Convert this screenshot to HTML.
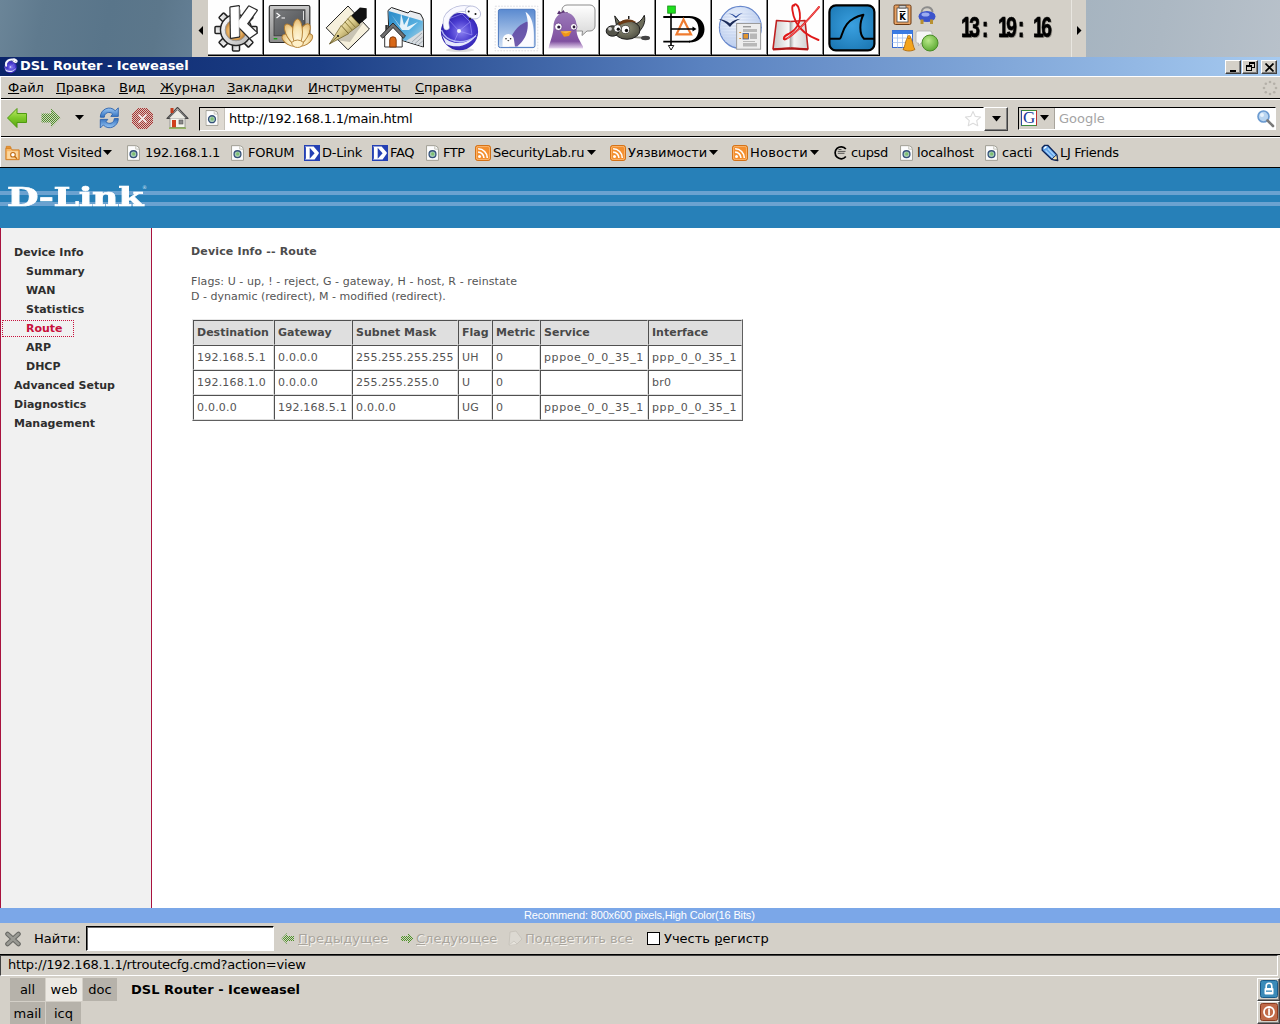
<!DOCTYPE html>
<html lang="ru">
<head>
<meta charset="utf-8">
<title>DSL Router - Iceweasel</title>
<style>
*{box-sizing:border-box;margin:0;padding:0}
html,body{width:1280px;height:1024px;overflow:hidden;background:#d4d0c8}
body{position:relative;font-family:"DejaVu Sans","Liberation Sans",sans-serif;font-size:13px;color:#000}
.abs{position:absolute}
.t{position:absolute;white-space:pre;line-height:15px}
u{text-decoration:underline;text-underline-offset:1px}
/* desktop + kicker panel */
#deskL{left:0;top:0;width:192px;height:57px;background:linear-gradient(100deg,#6b8598 0%,#5f7a8e 22%,#59758a 55%,#5c778b 80%,#647f95 100%)}
#deskR{left:1086px;top:0;width:194px;height:57px;background:linear-gradient(100deg,#a6b4c0 0%,#acb8c3 40%,#b8c1ca 100%)}
#panel{left:195px;top:0;width:890px;height:57px;background:#d4d0c8}
.pbtn{position:absolute;top:1px;width:56px;height:54px;background:#fff;border:1px solid #fff;border-right-color:#404040;border-bottom-color:#404040;box-shadow:inset -1px -1px 0 #808080}
/* window */
#title{left:0;top:57px;width:1280px;height:19px;background:linear-gradient(90deg,#0a246a 0%,#1c3f86 25%,#5a82c0 55%,#a6caf0 100%)}
#menubar{left:0;top:76px;width:1280px;height:23px;background:#d4d0c8;border-top:1px solid #fff;border-bottom:1px solid #000}
#navbar{left:0;top:99px;width:1280px;height:38px;background:#d4d0c8;border-top:1px solid #fff;border-bottom:1px solid #000}
#bmbar{left:0;top:137px;width:1280px;height:30px;background:#d4d0c8;border-top:1px solid #fff}
/* content */
#content{left:0;top:167px;width:1280px;height:741px;background:#fff;border-top:1px solid #000}
#dlhead{left:0;top:168px;width:1280px;height:60px;background:#2780b8}
#side{left:0;top:228px;width:152px;height:680px;background:#f1f1f1;border-left:1px solid #a8123e;border-right:1px solid #a8123e}
#reco{left:0;top:908px;width:1280px;height:15px;background:#7ba7e8}
#findbar{left:0;top:923px;width:1280px;height:32px;background:#d4d0c8;border-bottom:1px solid #000}
#status{left:0;top:955px;width:1280px;height:22px;background:#d4d0c8}
#taskbar{left:0;top:977px;width:1280px;height:47px;background:#d4d0c8}

.wb{position:absolute;top:60px;width:16px;height:14px;background:#d4d0c8;border:1px solid #fff;border-right-color:#404040;border-bottom-color:#404040;box-shadow:inset -1px -1px 0 #808080}
.wb i{position:absolute;background:#000;display:block}

#urlbox{left:199px;top:107px;width:785px;height:24px;background:#fff;border:1px solid;border-color:#000 #fff #fff #000}
#srchbox{left:1018px;top:107px;width:258px;height:23px;background:#fff;border:1px solid;border-color:#000 #fff #fff #000}
.btn3d{background:#d4d0c8;border:1px solid;border-color:#fff #404040 #404040 #fff;box-shadow:inset -1px -1px 0 #808080}

.pt{position:absolute;white-space:pre;font-size:11px;line-height:13px;color:#555}
.nav{position:absolute;white-space:pre;font-size:11px;line-height:13px;font-weight:bold;color:#2e2e2e}
#rt{position:absolute;left:192px;top:319px;border-collapse:separate;border-spacing:0;border:1px solid;border-color:#e8e8e8 #606060 #606060 #e8e8e8;font-size:11px;line-height:13px;color:#555;table-layout:fixed}
#rt td,#rt th{border:1px solid;border-color:#505050 #e0e0e0 #e0e0e0 #505050;height:25px;padding:0 0 0 3px;text-align:left;vertical-align:middle;white-space:pre;overflow:hidden}
#rt th{background:#dfdfdf;color:#484848;font-weight:bold}
#rt td{letter-spacing:.22px}
#rt td.us{letter-spacing:.6px}

.dis{color:#a9a59d;text-shadow:1px 1px 0 #f4f2ee}
.pgb{position:absolute;background:#b6b2aa;text-align:center;line-height:23px;font-size:13px;height:23px}
.ck{position:absolute;top:11px;transform-origin:0 0;transform:scaleX(.66);-webkit-text-stroke:.7px #000}
</style>
</head>
<body>
<svg width="0" height="0" style="position:absolute"><defs>
 <symbol id="pg" viewBox="0 0 14 17"><path d="M.6 .6 L9.500 .6 Q 13.400 1.200 13.400 5 L13.400 16.400 L.6 16.400 Z" fill="#fdfdfd" stroke="#9c9a90" stroke-width="1"/><path d="M9.300 1 L9.300 4.300 L13 4.600" fill="#f0f0ec" stroke="#b8b6ac" stroke-width=".7"/><circle cx="7" cy="9.800" r="3.700" fill="#a9cdb6" stroke="#34507a" stroke-width="1.400"/><circle cx="7.200" cy="9.500" r="1.700" fill="#7cc070"/></symbol>
 <symbol id="rss" viewBox="0 0 17 17"><rect x=".5" y=".5" width="16" height="16" rx="2.500" fill="#f49030" stroke="#d06808" stroke-width="1"/><rect x="1.500" y="1.500" width="14" height="14" rx="2" fill="none" stroke="#fcc080" stroke-width=".8"/><circle cx="4.800" cy="12.300" r="1.600" fill="#fff"/><path d="M3.300 7.600 A6.200 6.200 0 0 1 9.500 13.800" fill="none" stroke="#fff" stroke-width="1.700"/><path d="M3.300 4 A9.800 9.800 0 0 1 13.100 13.800" fill="none" stroke="#fff" stroke-width="1.700"/></symbol>
 <symbol id="dlico" viewBox="0 0 16 16"><rect width="16" height="16" fill="#2440b4"/><path d="M1 1.500 L9.600 1.500 L14.800 7.600 L14.800 8.600 L10.600 14.500 L1 14.500 L1.900 13.600 L1.900 2.400 Z" fill="#fff"/><path d="M5.700 2.800 L10.600 8.300 L5.700 13.800 Z" fill="#2440b4"/></symbol>
</defs></svg>
<div class="abs" id="deskL"></div>
<!-- ===== KDE panel (kicker) ===== -->
<svg class="abs" style="left:192px;top:0" width="894" height="57" viewBox="192 0 894 57">
<defs>
 <radialGradient id="kor" cx="45%" cy="55%" r="55%"><stop offset="0" stop-color="#fff4d8"/><stop offset=".6" stop-color="#e8b060"/><stop offset="1" stop-color="#a86820"/></radialGradient>
 <linearGradient id="kgear" x1="0" y1="0" x2="1" y2="1"><stop offset="0" stop-color="#ffffff"/><stop offset="1" stop-color="#b8b8b8"/></linearGradient>
 <linearGradient id="mon" x1="0" y1="0" x2="0" y2="1"><stop offset="0" stop-color="#c8c8c8"/><stop offset="1" stop-color="#8c8c8c"/></linearGradient>
 <linearGradient id="scr" x1="0" y1="0" x2="1" y2="1"><stop offset="0" stop-color="#7a7c7e"/><stop offset="1" stop-color="#4a4c50"/></linearGradient>
 <radialGradient id="shell" cx="50%" cy="90%" r="90%"><stop offset="0" stop-color="#fffbe8"/><stop offset=".65" stop-color="#f8e4b0"/><stop offset="1" stop-color="#e4b870"/></radialGradient>
 <linearGradient id="nib" x1="0" y1="0" x2="1" y2="1"><stop offset="0" stop-color="#fff8d0"/><stop offset=".5" stop-color="#d8c888"/><stop offset="1" stop-color="#8a7a40"/></linearGradient>
 <linearGradient id="fold" x1="0" y1="0" x2="1" y2="1"><stop offset="0" stop-color="#2a8ac8"/><stop offset=".6" stop-color="#58b0e0"/><stop offset="1" stop-color="#c8d8e0"/></linearGradient>
 <radialGradient id="globe" cx="55%" cy="50%" r="60%"><stop offset="0" stop-color="#8a80f0"/><stop offset=".5" stop-color="#4a3cd0"/><stop offset="1" stop-color="#2418a0"/></radialGradient>
 <linearGradient id="stamp" x1="0" y1="0" x2="0" y2="1"><stop offset="0" stop-color="#5a8ad0"/><stop offset="1" stop-color="#d0e0f4"/></linearGradient>
 <linearGradient id="pidg" x1="0" y1="0" x2="0" y2="1"><stop offset="0" stop-color="#9a78b8"/><stop offset=".8" stop-color="#8050a0"/><stop offset="1" stop-color="#e8d8f0"/></linearGradient>
 <linearGradient id="bub" x1="0" y1="0" x2="0" y2="1"><stop offset="0" stop-color="#ffffff"/><stop offset="1" stop-color="#d8d8d8"/></linearGradient>
 <radialGradient id="wil" cx="45%" cy="40%" r="65%"><stop offset="0" stop-color="#94947c"/><stop offset="1" stop-color="#4c4c40"/></radialGradient>
 <radialGradient id="ooo" cx="40%" cy="35%" r="70%"><stop offset="0" stop-color="#f4f8ff"/><stop offset="1" stop-color="#b4c8ec"/></radialGradient>
 <linearGradient id="book" x1="0" y1="0" x2="1" y2="0"><stop offset="0" stop-color="#c8c8c8"/><stop offset=".45" stop-color="#f8f8f8"/><stop offset=".5" stop-color="#b0b0b0"/><stop offset=".6" stop-color="#f4f4f4"/><stop offset="1" stop-color="#d0d0d0"/></linearGradient>
 <radialGradient id="shark" cx="50%" cy="45%" r="65%"><stop offset="0" stop-color="#3aa0e0"/><stop offset="1" stop-color="#1c78b4"/></radialGradient>
 <radialGradient id="grn" cx="40%" cy="35%" r="70%"><stop offset="0" stop-color="#b8e888"/><stop offset="1" stop-color="#5aa830"/></radialGradient>
 <g id="pbtn"><rect x="0" y="0" width="56" height="56" fill="#000"/><rect x="0" y="0" width="55" height="55" fill="#808080"/><rect x="0" y="0" width="54" height="54" fill="#fefefe"/></g>
</defs>
<rect x="192" y="0" width="894" height="57" fill="#d4d0c8"/>
<rect x="192" y="0" width="16" height="57" fill="#d1cdc5"/>
<path d="M203 26 L203 35 L198.500 30.500 Z" fill="#000"/>
<g id="btns">
<use href="#pbtn" x="208"/><use href="#pbtn" x="264"/><use href="#pbtn" x="320"/><use href="#pbtn" x="376"/><use href="#pbtn" x="432"/><use href="#pbtn" x="488"/>
<use href="#pbtn" x="544"/><use href="#pbtn" x="600"/><use href="#pbtn" x="656"/><use href="#pbtn" x="712"/><use href="#pbtn" x="768"/><use href="#pbtn" x="824"/>
</g>
<!-- 1 KDE menu -->
<g transform="translate(208,0)">
 <g transform="translate(28,30)" stroke="#222" stroke-width="1.500" fill="url(#kgear)">
  <rect x="-3.500" y="-21" width="7" height="9" rx="1"/>
  <rect x="-3.500" y="-21" width="7" height="9" rx="1" transform="rotate(45)"/>
  <rect x="-3.500" y="-21" width="7" height="9" rx="1" transform="rotate(90)"/>
  <rect x="-3.500" y="-21" width="7" height="9" rx="1" transform="rotate(135)"/>
  <rect x="-3.500" y="-21" width="7" height="9" rx="1" transform="rotate(180)"/>
  <rect x="-3.500" y="-21" width="7" height="9" rx="1" transform="rotate(225)"/>
  <rect x="-3.500" y="-21" width="7" height="9" rx="1" transform="rotate(270)"/>
  <rect x="-3.500" y="-21" width="7" height="9" rx="1" transform="rotate(315)"/>
  <circle r="15.500"/>
  <circle r="14.300" stroke="none"/>
  <circle r="10.800" fill="url(#kor)" stroke="#9a9a9a" stroke-width="1"/>
 </g>
 <g fill="#fff" stroke="#2a2a2a" stroke-width="2.400" stroke-linejoin="round">
  <path d="M29 23 L41 6.500 L48.700 10.400 L36 28 Z"/><path d="M29 25 L35.500 20.500 L48.700 32.800 L41.600 37.800 Z"/><path d="M22.500 7.500 L30.800 6.300 L31 36.500 L23 37.800 Z"/>
 </g>
 <g fill="#fff">
  <path d="M29 23 L41 6.500 L48.700 10.400 L36 28 Z"/><path d="M29 25 L35.500 20.500 L48.700 32.800 L41.600 37.800 Z"/><path d="M22.500 7.500 L30.800 6.300 L31 36.500 L23 37.800 Z"/>
 </g>
 <path d="M31 7 L31 36" stroke="#d8d8d8" stroke-width=".8"/>
</g>
<!-- 2 Konsole -->
<g transform="translate(264,0)">
 <rect x="5.300" y="5.500" width="40.500" height="37" rx="1.500" fill="url(#mon)" stroke="#2c2c2c" stroke-width="1.200"/>
 <rect x="10" y="9.800" width="31" height="26" fill="url(#scr)" stroke="#3a3a3a" stroke-width=".8"/>
 <path d="M12.500 13 L15.800 15.500 L12.500 18 M17.500 18 L21 18" fill="none" stroke="#fff" stroke-width="1.200"/>
 <path d="M39.500 11 L39.500 20" stroke="#ddd" stroke-width="1"/>
 <rect x="9.700" y="38" width="3.600" height="1.400" fill="#18a018"/>
 <g transform="translate(33.500,44.500)" fill="url(#shell)" stroke="#b07c30" stroke-width=".9">
  <ellipse cx="0" cy="-8.500" rx="4.800" ry="9" transform="rotate(-60)"/>
  <ellipse cx="0" cy="-8.500" rx="4.800" ry="9" transform="rotate(58)"/>
  <ellipse cx="0" cy="-11.500" rx="5" ry="11.800" transform="rotate(-30)"/>
  <ellipse cx="0" cy="-11.500" rx="5" ry="11.800" transform="rotate(29)"/>
  <ellipse cx="0" cy="-12.500" rx="5" ry="13"/>
  <path d="M-6 -2 Q 0 -7 6 -2 Q 5 3 0 3 Q -5 3 -6 -2 Z" fill="#fff0c8"/>
 </g>
</g>
<!-- 3 pen -->
<g transform="translate(320,0)">
 <path d="M28 6 L49.400 29 L28 49.800 L6.200 27.900 Z" fill="#f6f0dc" stroke="#222" stroke-width="1"/>
 <path d="M14 40 L34 28 L44 22 L30 42 Z" fill="#000" opacity=".18"/>
 <path d="M39.900 7.600 L46.700 8.200 L46.700 18 L39.250 24.560 L31.100 15.700 Z" fill="#111"/>
 <path d="M30.900 15.500 L39.500 24.800 L28.300 33.300 L21.500 26 Z" fill="url(#nib)" stroke="#6a5a20" stroke-width=".7"/>
 <path d="M27.500 18.700 L35.800 27.700 M24.800 21.800 L32.200 30" stroke="#8a7a38" stroke-width="1"/>
 <path d="M21.200 25.600 L28.600 33.700 L9.500 43.900 Z" fill="url(#nib)" stroke="#6a5a20" stroke-width=".7"/>
 <circle cx="18" cy="36" r="1.100" fill="#111"/><path d="M18 36 L9.500 43.900" stroke="#3a3010" stroke-width=".7"/>
</g>
<!-- 4 home folder -->
<g transform="translate(376,0)">
 <path d="M12 10.500 L15.500 7.500 L32 13 L34 11 L44.500 14 L47.200 19 L47.500 47 L13 36.500 Z" fill="#e8ecf0" stroke="#222" stroke-width="1"/>
 <path d="M12.500 11 L46.800 21 L47 46.300 L13.500 36 Z" fill="url(#fold)"/>
 <path d="M26 30 L15 14 L24 26 L25 13 L28 25 L34 15 L31 27 L42 22 L33 30 Z" fill="#fff" opacity=".85"/>
 <path d="M47 30 L47 46.300 L30 41 Z" fill="#d8dce0"/>
 <path d="M36 42 L46 33 M39 43.500 L46.500 37 M42.500 44.500 L46.800 41" stroke="#9aa4ac" stroke-width=".9"/>
 <path d="M9.300 25 L11.800 25 L11.800 31 L9.300 33 Z" fill="#333"/>
 <path d="M8.700 35.500 L17 27 L26.200 35.500 L26.200 47 L8.700 47 Z" fill="#fff" stroke="#333" stroke-width="1"/>
 <path d="M4.400 36 L17 23 L29.500 36 L27.300 38.200 L17 27.600 L6.800 38.200 Z" fill="#707070" stroke="#222" stroke-width=".9" stroke-linejoin="round"/>
 <path d="M13.700 47 L13.700 40 A3.250 3.250 0 0 1 20.200 40 L20.200 47 Z" fill="#d86818" stroke="#7a3408" stroke-width=".9"/>
</g>
<!-- 5 konqueror / iceweasel globe -->
<g id="iceg" transform="translate(432,0)">
 <ellipse cx="28" cy="50" rx="14" ry="2" fill="#000" opacity=".12"/>
 <circle cx="27.500" cy="31.700" r="18.600" fill="url(#globe)"/>
 <path d="M27 31 L16 19 M27 31 L38 22 M27 31 L22 42 M27 31 L40 35 M16 19 L30 14 L38 22 L40 35" stroke="#a8a0ff" stroke-width=".7" fill="none" opacity=".8"/>
 <circle cx="27" cy="31" r="2" fill="#fff" opacity=".9"/>
 <path d="M10 35 C 18 46, 36 46, 45.500 33 C 40 44, 26 50, 14 44 Z" fill="#eef2ff" opacity=".95"/>
 <path d="M9.500 30 C 14 42, 30 46, 44 36" stroke="#c8d0ff" stroke-width="1.500" fill="none" opacity=".8"/>
 <path d="M14.500 27 C 11 14, 24 6.500, 38 9" fill="none" stroke="#b4b8d8" stroke-width="6.400" stroke-linecap="round"/>
 <path d="M14.500 27 C 11 14, 24 6.500, 38 9" fill="none" stroke="#f8f8ff" stroke-width="5" stroke-linecap="round"/>
 <ellipse cx="41" cy="12.500" rx="8" ry="6" transform="rotate(28 41 12.500)" fill="#fcfcff" stroke="#b4b8d8" stroke-width=".8"/>
 <circle cx="36.700" cy="11.500" r="1" fill="#111"/><circle cx="43.500" cy="14" r="1" fill="#111"/><circle cx="38" cy="18.800" r="1.100" fill="#222"/>
</g>
<!-- 6 icedove stamp -->
<g transform="translate(488,0)">
 <rect x="7.200" y="6.200" width="42.600" height="44.600" fill="#fdfdfd" stroke="#dcdce2" stroke-width="1" stroke-dasharray="1.600 1.400"/>
 <rect x="10.400" y="9.300" width="36.600" height="38.300" rx="2" fill="url(#stamp)" stroke="#4a78c0" stroke-width="1"/>
 <path d="M21 46.500 C 22 34, 30 25, 38 22 C 42 21, 43.500 26, 41.500 32 C 39 38, 34 43, 30 46.500 Z" fill="#5a3c9c" opacity=".8"/>
 <path d="M37.500 12 C 45 16, 47 30, 45.500 46.500 L 29 46.500 C 38 40, 43 28, 37.500 12 Z" fill="#fbfbff"/>
 <path d="M14.500 46.800 L14.500 40 A5.700 6 0 0 1 26 40 L27 46.800 Z" fill="#fdfdfd"/>
 <circle cx="18" cy="38.700" r=".8" fill="#222"/><circle cx="22.600" cy="38.700" r=".8" fill="#222"/><ellipse cx="20.300" cy="40.600" rx="1" ry=".6" fill="#444"/>
</g>
<!-- 7 pidgin -->
<g transform="translate(544,0)">
 <path d="M23 5 L46 5 A5 5 0 0 1 51 10 L51 26 A5 5 0 0 1 46 31 L43 31 L38 35.500 L38.500 31 L23 31 A5 5 0 0 1 18 26 L18 10 A5 5 0 0 1 23 5 Z" fill="url(#bub)" stroke="#8c8c8c" stroke-width="1"/>
 <path d="M13 14 L15 10.500 L17 12.500 L19.500 10 L21 12.500 L24 12 L22 15 Z" fill="#5a3272"/>
 <path d="M4.500 48.500 C 7 38, 9.500 34, 9.500 27 C 9.500 18, 15 12.500, 21 12.500 C 28 12.500, 33 18, 32.500 27 C 32 34, 34 38, 39 46.500 L39 48.500 Z" fill="url(#pidg)"/>
 <circle cx="14.400" cy="26.800" r="3.800" fill="#fff" stroke="#6a4088" stroke-width=".8"/><circle cx="14.800" cy="27" r="1.600" fill="#2a1a3a"/>
 <circle cx="29.700" cy="26.800" r="3.300" fill="#fff" stroke="#6a4088" stroke-width=".8"/><circle cx="30" cy="27" r="1.400" fill="#2a1a3a"/>
 <path d="M16.500 31.500 L27.500 31 L25 36 L20 36.800 Z" fill="#f09418"/><path d="M16.500 31.500 L27.500 31 L22 33.500 Z" fill="#f8b848"/>
</g>
<!-- 8 gimp -->
<g transform="translate(600,0)">
 <path d="M26 36.500 L46 38" stroke="#8c8c84" stroke-width="2.200"/><ellipse cx="45.500" cy="38" rx="4.500" ry="2.200" fill="#444"/>
 <path d="M14.700 15.900 L19.500 22 L16.500 25.500 Z" fill="#6c6c5a" stroke="#1c1c1c" stroke-width="1"/>
 <path d="M44.300 15.300 C 46 22, 43 29, 37 33 L32 25 C 38 24, 42 20, 44.300 15.300 Z" fill="#6c6c5a" stroke="#1c1c1c" stroke-width="1"/>
 <ellipse cx="27" cy="30" rx="13" ry="9.300" fill="url(#wil)" stroke="#1c1c1c" stroke-width="1"/>
 <ellipse cx="12.500" cy="31" rx="6.300" ry="5.200" fill="#54544a" stroke="#1c1c1c" stroke-width="1"/>
 <circle cx="10" cy="28.800" r="1.900" fill="#d0d0d0"/>
 <path d="M18 23.500 Q 27 15.500 37 22.500 Q 27 20.500 19 25.500 Z" fill="#6a3a16"/><rect x="28" y="16" width="1.500" height="3" fill="#222"/>
 <circle cx="17.500" cy="28.400" r="3.700" fill="#fff" stroke="#222" stroke-width=".6"/><circle cx="18.300" cy="29.200" r="1.600" fill="#111"/>
 <circle cx="25.500" cy="29.500" r="4.100" fill="#fff" stroke="#222" stroke-width=".6"/><circle cx="26.500" cy="30.500" r="1.700" fill="#111"/>
</g>
<!-- 9 dia -->
<g transform="translate(656,0)">
 <path d="M7.300 17 L34 17 M7.300 41.600 L34 41.600" stroke="#000" stroke-width="1.800"/>
 <path d="M33 16.100 C 43 16.100, 48.500 22, 48.500 29.300 C 48.500 36.600, 43 42.500, 33 42.500 L33 40.700 C 39 40.700, 42.500 36, 42.500 29.300 C 42.500 22.600, 39 17.900, 33 17.900 Z" fill="#000"/>
 <path d="M27.500 19.500 L35 34.300 L20.500 34.300 Z" fill="none" stroke="#f07c30" stroke-width="2.200" stroke-linejoin="miter"/>
 <path d="M15 13 L15 46" stroke="#000" stroke-width="1.600"/>
 <path d="M15 29 L38 29" stroke="#000" stroke-width="1.500"/><path d="M36.500 26.600 L40.500 29 L36.500 31.400 Z" fill="#000"/>
 <path d="M12.400 45.500 L17.800 45.500 L15.100 50 Z" fill="#fff" stroke="#000" stroke-width=".9"/>
 <rect x="11.700" y="6" width="7.600" height="7.200" fill="#1ee01e" stroke="#168a16" stroke-width=".8"/>
</g>
<!-- 10 openoffice -->
<g transform="translate(712,0)">
 <circle cx="28.400" cy="27.400" r="21" fill="url(#ooo)" stroke="#6888cc" stroke-width="1.200"/>
 <path d="M9 20 L48 20 M8 23 L49 23 M7.500 26 L49.500 26 M7.500 29 L49.500 29 M8 32 L49 32 M9 35 L48 35 M11 38 L46 38 M13 41 L43 41 M11 17 L46 17 M14 14 L43 14" stroke="#c4d2ee" stroke-width=".8"/>
 <path d="M6.500 19 Q 13.500 19.500 18 23.500 Q 22 19.300 28.500 18.800 Q 22 21.500 18 27 Q 13 21.500 6.500 19 Z" fill="#1a2a58"/>
 <path d="M16.500 13.300 Q 21 13.800 24 16.300 Q 27 13.400 31 12.800 Q 27 14.800 24 18 Q 21 15 16.500 13.300 Z" fill="#2c4c9c"/>
 <rect x="24.600" y="23.500" width="24" height="25.700" fill="#ededed" stroke="#9c9c9c" stroke-width="1"/>
 <rect x="31" y="26.300" width="8" height="1" fill="#777"/><rect x="31" y="29" width="14" height="3" fill="#b8b8b8"/>
 <rect x="31" y="33.500" width="5.500" height="5.500" fill="#e09430" stroke="#38589c" stroke-width=".8"/><rect x="38" y="33.500" width="7" height="5.500" fill="#b8b8b8"/>
 <rect x="31" y="41" width="12" height=".8" fill="#aaa"/><rect x="31" y="43" width="14" height="3.500" fill="#b8b8b8"/>
 <rect x="27.300" y="32" width="1.800" height="1" fill="#e09430"/><rect x="27.300" y="38" width="1.800" height="1" fill="#e09430"/>
</g>
<!-- 11 pdf reader -->
<g transform="translate(768,0)">
 <path d="M5 49 L8.500 20.500 L22.600 21.500 L37 20.500 L40 49 L22.600 48 Z" fill="url(#book)" stroke="#c02020" stroke-width="1.600" stroke-linejoin="round"/>
 <path d="M22.600 21.500 L22.600 48" stroke="#a8a8a8" stroke-width=".8"/>
 <path d="M5 49.500 L22.600 48.500 L40 49.500" stroke="#b01818" stroke-width="2" fill="none"/>
 <path d="M26 5.500 C 23 3.500, 24 14, 28 22 C 32 30, 40 36, 50.500 40" fill="none" stroke="#e01818" stroke-width="1.900" stroke-linecap="round"/>
 <path d="M51 7 C 44 15, 32 30, 19 38.500 C 14.500 41.500, 14.500 36.500, 20.500 34 C 28 30, 34.500 22, 31 9 C 30 4.500, 26.500 3, 26 5.500" fill="none" stroke="#e01818" stroke-width="1.900" stroke-linecap="round"/>
 <path d="M51 7 C 44 15, 32 30, 19 38.500" fill="none" stroke="#ff9a9a" stroke-width=".6"/>
</g>
<!-- 12 wireshark -->
<g transform="translate(824,0)">
 <rect x="5.400" y="5.400" width="45" height="45" rx="6.500" fill="url(#shark)" stroke="#000" stroke-width="2.200"/>
 <path d="M5.400 38.800 L15.500 38.800 C 19 38.800, 16 20, 39.400 14.800 C 35.500 22, 35 34, 40 38.800 L50.400 38.800" fill="none" stroke="#000" stroke-width="2" stroke-linejoin="round"/>
</g>
<!-- systray -->
<rect x="894" y="5" width="17" height="19.500" rx="1.500" fill="#e8a264" stroke="#6a3810" stroke-width="1"/>
<rect x="897" y="8" width="11" height="14" fill="#fff" stroke="#444" stroke-width=".8"/>
<path d="M899 8 L899 5.500 L906 5.500 L906 8 Z" fill="#d0d0d0" stroke="#444" stroke-width=".7"/>
<path d="M899.500 11.500 L905.500 11.500" stroke="#000" stroke-width="1"/>
<text x="899.300" y="20.300" font-family="DejaVu Sans, Liberation Sans, sans-serif" font-size="8.500" font-weight="bold" fill="#000">K</text>
<path d="M921.500 13 C 921.500 5.500, 932.500 5.500, 932.500 12" fill="none" stroke="#8c8c8c" stroke-width="2"/>
<ellipse cx="927" cy="16.500" rx="8.500" ry="5.500" fill="#3c54cc"/><ellipse cx="925.500" cy="14.500" rx="4" ry="2" fill="#9cacf0"/>
<rect x="920.500" y="19.500" width="3" height="4.500" fill="#b89030"/><rect x="930" y="19.500" width="3" height="4.500" fill="#b89030"/>
<rect x="892.500" y="30.500" width="20" height="17" fill="#fff" stroke="#3a6cd0" stroke-width="1"/>
<rect x="892.500" y="30.500" width="20" height="3.500" fill="#3a7ce4"/>
<path d="M892.500 38 L912.500 38 M892.500 42.500 L912.500 42.500 M897.500 34 L897.500 47.500 M902.500 34 L902.500 47.500 M907.500 34 L907.500 47.500" stroke="#a8c4f0" stroke-width=".8"/>
<path d="M903 49.500 C 905 47, 905 42, 906.500 39.500 C 907.500 36, 910.500 36, 911.500 39.500 C 913 42, 913 47, 915 49.500 C 911 51.500, 907 51.500, 903 49.500 Z" fill="#f4a41c" stroke="#a8640c" stroke-width=".8"/>
<circle cx="909" cy="37" r="1.600" fill="#f4a41c" stroke="#a8640c" stroke-width=".6"/>
<path d="M918 31 L930 31 A2 2 0 0 1 932 33 L932 41 A2 2 0 0 1 930 43 L921 43 L918.500 46 L918.500 43 A2 2 0 0 1 916 41 L916 33 A2 2 0 0 1 918 31 Z" fill="#f6f6f6" stroke="#b0b0b0" stroke-width=".8"/>
<circle cx="930" cy="43" r="8" fill="url(#grn)" stroke="#4a8c28" stroke-width="1"/>
<!-- clock separator + arrow -->
<path d="M1071.500 0 L1071.500 57" stroke="#e8e6e0" stroke-width="1"/>
<path d="M1077 26 L1077 35 L1081.500 30.500 Z" fill="#000"/>

</svg>
<div class="abs" id="clock" style="left:0;top:0;width:0;height:0;font-family:'Liberation Sans','DejaVu Sans',sans-serif;font-weight:bold;font-size:29px;line-height:32px;color:#000;text-shadow:1.5px 1px 0 #9c988f;white-space:pre"><span class="ck" style="left:960.500px;letter-spacing:-3.600px">13</span><span class="ck" style="left:981.500px">:</span><span class="ck" style="left:997.500px;letter-spacing:-3.600px">19</span><span class="ck" style="left:1018px">:</span><span class="ck" style="left:1033px;letter-spacing:-3.600px">16</span></div>

<div class="abs" id="deskR"></div>
<div class="abs" id="title"></div>
<div class="abs" id="menubar"></div>
<div class="abs" id="navbar"></div>
<div class="abs" id="bmbar"></div>

<!-- ===== window title ===== -->
<svg class="abs" style="left:4px;top:58px" width="14" height="16" viewBox="440 4 42 48"><use href="#iceg"/></svg>
<div class="t" style="left:20px;top:58px;color:#fff;font-weight:bold;letter-spacing:-.02px">DSL Router - Iceweasel</div>
<!-- window buttons -->
<div class="wb" style="left:1225px"><i style="left:4px;top:9px;width:6px;height:2px"></i></div>
<div class="wb" style="left:1242px"><i style="left:6px;top:1px;width:6px;height:6px;background:none;border:1px solid #000;border-top-width:2px"></i><i style="left:3px;top:4px;width:6px;height:6px;background:#d4d0c8;border:1px solid #000;border-top-width:2px"></i></div>
<div class="wb" style="left:1261px"><svg class="abs" style="left:3px;top:2px" width="9" height="9" viewBox="0 0 9 9"><path d="M0.5 0.5 L8.5 8.5 M8.5 0.5 L0.5 8.5" stroke="#000" stroke-width="1.7"/></svg></div>

<!-- ===== menu bar ===== -->
<div class="t" style="left:8px;top:80px"><u>Ф</u>айл</div>
<div class="t" style="left:56px;top:80px"><u>П</u>равка</div>
<div class="t" style="left:119px;top:80px"><u>В</u>ид</div>
<div class="t" style="left:160px;top:80px"><u>Ж</u>урнал</div>
<div class="t" style="left:227px;top:80px"><u>З</u>акладки</div>
<div class="t" style="left:308px;top:80px"><u>И</u>нструменты</div>
<div class="t" style="left:415px;top:80px"><u>С</u>правка</div>

<!-- ===== navigation toolbar ===== -->
<svg class="abs" style="left:0;top:100px" width="200" height="36" viewBox="0 0 200 36">
 <defs>
  <linearGradient id="gg" x1="0" y1="0" x2="0" y2="1"><stop offset="0" stop-color="#c2ea6a"/><stop offset=".5" stop-color="#7cc92a"/><stop offset="1" stop-color="#5aa512"/></linearGradient>
  <linearGradient id="gb" x1="0" y1="0" x2="0" y2="1"><stop offset="0" stop-color="#9cc8f4"/><stop offset="1" stop-color="#3070c0"/></linearGradient>
  <pattern id="dotg" width="2" height="2" patternUnits="userSpaceOnUse"><rect width="2" height="2" fill="#cfd4bf"/><rect width="1" height="1" fill="#4f8f2c"/><rect x="1" y="1" width="1" height="1" fill="#4f8f2c"/></pattern>
  <pattern id="dotr" width="2" height="2" patternUnits="userSpaceOnUse"><rect width="2" height="2" fill="#dcc4bc"/><rect width="1" height="1" fill="#a43434"/><rect x="1" y="1" width="1" height="1" fill="#a43434"/></pattern>
 </defs>
 <!-- back -->
 <path d="M7.5 18 L17 8.5 L17 13.5 L26.5 13.5 L26.5 22.5 L17 22.5 L17 27.5 Z" fill="url(#gg)" stroke="#4e9a10" stroke-width="1" stroke-linejoin="round"/>
 <!-- forward (disabled) -->
 <path d="M60.500 18 L51 8.500 L51 13.500 L41.500 13.500 L41.500 22.500 L51 22.500 L51 27.500 Z" fill="url(#dotg)"/>
 <!-- dropdown -->
 <path d="M75 15 L84 15 L79.500 20 Z" fill="#000"/>
 <!-- reload -->
 <path id="rl" d="M100.300 17.200 C 100.300 9, 110 5, 115.300 10.800 L118.300 7.800 L118.300 16.400 L110.800 16.400 L112.700 14 C 109.500 11, 104.500 12.500, 104.300 17.200 Z" fill="url(#gb)" stroke="#2c62ac" stroke-width=".9" stroke-linejoin="round"/>
 <use href="#rl" transform="rotate(180 109.300 17.900)"/>
 <!-- stop (disabled) -->
 <path d="M138 8 L147 8 L153 14 L153 23 L147 29 L138 29 L132 23 L132 14 Z" fill="url(#dotr)"/>
 <path d="M138.500 14.500 L146.500 22.500 M146.500 14.500 L138.500 22.500" stroke="#efe2e0" stroke-width="1.900"/>
 <!-- home -->
 <path d="M170 18 L170 27.500 L185 27.500 L185 18 Z" fill="#f4f4ec" stroke="#888" stroke-width=".8"/>
 <path d="M167 18.500 L177.500 7.500 L188 18.500 L186 18.500 L177.500 10 L169 18.500 Z" fill="#fff" stroke="#444" stroke-width="1.100" stroke-linejoin="round"/>
 <path d="M169.500 18 L177.500 10 L185.500 18 Z" fill="#ececE4"/>
 <rect x="170.500" y="8" width="3" height="5" fill="#c43c1c"/>
 <rect x="172" y="20" width="4" height="7.500" fill="#d0401c"/>
 <rect x="179" y="20" width="4" height="4" fill="#888" stroke="#555" stroke-width=".6"/>
 <rect x="169" y="27.500" width="17" height="1.200" fill="#7aa83a"/>
</svg>
<!-- url bar -->
<div class="abs" id="urlbox"></div>
<div class="abs" style="left:200px;top:108px;width:25px;height:22px;background:#dedad2;border-right:1px solid #c4c0b8"></div>
<svg class="abs pgico" style="left:205px;top:110px" width="14" height="16" viewBox="0 0 14 17"><use href="#pg"/></svg>
<div class="t" style="left:229px;top:111px;letter-spacing:-.2px">http://192.168.1.1/main.html</div>
<svg class="abs" style="left:964px;top:110px" width="18" height="17" viewBox="0 0 18 17"><path d="M9 1.500 L11.300 6.400 L16.600 7 L12.700 10.600 L13.800 15.800 L9 13.200 L4.200 15.800 L5.300 10.600 L1.400 7 L6.700 6.400 Z" fill="#fff" stroke="#dcdcdc" stroke-width="1.100" stroke-linejoin="round"/></svg>
<div class="abs btn3d" style="left:984px;top:107px;width:24px;height:24px"><svg class="abs" style="left:7px;top:8px" width="9" height="6" viewBox="0 0 9 6"><path d="M0 0 L9 0 L4.500 5.500 Z"/></svg></div>
<!-- search box -->
<div class="abs" id="srchbox"></div>
<div class="abs" style="left:1019px;top:108px;width:36px;height:21px;background:#d4d0c8;border-right:1px solid #a8a49c"></div>
<div class="abs" style="left:1021px;top:110px;width:16px;height:16px;background:#fff;border:1px solid;border-color:#3c8c3c #c03030 #3c8c3c #2a4aa4"></div>
<div class="t" style="left:1023px;top:108px;font-family:'Liberation Serif','DejaVu Serif',serif;font-size:17px;line-height:20px;color:#1a3a9c">G</div>
<svg class="abs" style="left:1040px;top:115px" width="9" height="6" viewBox="0 0 9 6"><path d="M0 0 L9 0 L4.500 5.500 Z"/></svg>
<div class="t" style="left:1059px;top:111px;color:#a4a4a4">Google</div>
<svg class="abs" style="left:1256px;top:109px" width="19" height="19" viewBox="0 0 19 19"><circle cx="7.500" cy="7.500" r="5.500" fill="#b8d4f0" stroke="#6a9ad0" stroke-width="1.600"/><path d="M11.500 11.500 L17 17" stroke="#7a7a7a" stroke-width="2.600" stroke-linecap="round"/><circle cx="6" cy="6" r="2" fill="#e8f2fc"/></svg>
<!-- throbber -->
<svg class="abs" style="left:1262px;top:80px" width="16" height="16" viewBox="0 0 16 16"><g fill="#b4b0a8"><circle cx="8" cy="2" r="1.300"/><circle cx="12.200" cy="3.800" r="1.300"/><circle cx="14" cy="8" r="1.300"/><circle cx="12.200" cy="12.200" r="1.300"/><circle cx="8" cy="14" r="1.300"/><circle cx="3.800" cy="12.200" r="1.300"/><circle cx="2" cy="8" r="1.300"/><circle cx="3.800" cy="3.800" r="1.300"/></g></svg>

<!-- ===== bookmarks toolbar ===== -->
<svg class="abs" style="left:4px;top:145px" width="17" height="16" viewBox="0 0 17 18"><path d="M1 3.500 L1 16.500 L16 16.500 L16 5.500 L8 5.500 L6.500 3.500 Z" fill="#f8b868" stroke="#d07818" stroke-width="1"/><path d="M1.500 1.500 L6 1.500 L7 3.500 L1.500 3.500 Z" fill="#f0a040" stroke="#d07818" stroke-width=".8"/><rect x="2.500" y="7" width="12" height="8.500" fill="#fcd8a0"/><circle cx="9" cy="11" r="2.600" fill="#fff" stroke="#c06a10" stroke-width="1.200"/><path d="M11 13 L13.500 15.500" stroke="#c06a10" stroke-width="1.500"/></svg>
<div class="t" style="left:23px;top:145px">Most Visited</div>
<svg class="abs" style="left:103px;top:150px" width="9" height="5" viewBox="0 0 9 5"><path d="M0 0 L9 0 L4.500 5 Z"/></svg>
<svg class="abs" style="left:127px;top:145px" width="13" height="16" viewBox="0 0 14 17"><use href="#pg"/></svg>
<div class="t" style="left:145px;top:145px;letter-spacing:-0.33px">192.168.1.1</div>
<svg class="abs" style="left:231px;top:145px" width="13" height="16" viewBox="0 0 14 17"><use href="#pg"/></svg>
<div class="t" style="left:248px;top:145px;letter-spacing:-0.25px">FORUM</div>
<svg class="abs" style="left:304px;top:145px" width="16" height="16" viewBox="0 0 16 16"><use href="#dlico"/></svg>
<div class="t" style="left:322px;top:145px;letter-spacing:-0.2px">D-Link</div>
<svg class="abs" style="left:372px;top:145px" width="16" height="16" viewBox="0 0 16 16"><use href="#dlico"/></svg>
<div class="t" style="left:390px;top:145px;letter-spacing:-0.3px">FAQ</div>
<svg class="abs" style="left:426px;top:145px" width="13" height="16" viewBox="0 0 14 17"><use href="#pg"/></svg>
<div class="t" style="left:443px;top:145px;letter-spacing:-0.5px">FTP</div>
<svg class="abs" style="left:475px;top:145px" width="16" height="16" viewBox="0 0 17 17"><use href="#rss"/></svg>
<div class="t" style="left:493px;top:145px;letter-spacing:-0.24px">SecurityLab.ru</div>
<svg class="abs" style="left:587px;top:150px" width="9" height="5" viewBox="0 0 9 5"><path d="M0 0 L9 0 L4.500 5 Z"/></svg>
<svg class="abs" style="left:610px;top:145px" width="16" height="16" viewBox="0 0 17 17"><use href="#rss"/></svg>
<div class="t" style="left:628px;top:145px;letter-spacing:-0.05px">Уязвимости</div>
<svg class="abs" style="left:709px;top:150px" width="9" height="5" viewBox="0 0 9 5"><path d="M0 0 L9 0 L4.500 5 Z"/></svg>
<svg class="abs" style="left:732px;top:145px" width="16" height="16" viewBox="0 0 17 17"><use href="#rss"/></svg>
<div class="t" style="left:750px;top:145px;letter-spacing:0.2px">Новости</div>
<svg class="abs" style="left:810px;top:150px" width="9" height="5" viewBox="0 0 9 5"><path d="M0 0 L9 0 L4.500 5 Z"/></svg>
<svg class="abs" style="left:833px;top:145px" width="16" height="16" viewBox="0 0 16 16"><path d="M12.830 4.100 A6 6 0 1 0 12.830 11.500" fill="none" stroke="#000" stroke-width="1.700"/><path d="M5.500 4.500 L8.500 4.500 M4.800 6.400 L12.500 6.400 M4.800 8.300 L11.500 8.300" stroke="#333" stroke-width=".8"/></svg>
<div class="t" style="left:851px;top:145px;letter-spacing:-0.37px">cupsd</div>
<svg class="abs" style="left:900px;top:145px" width="13" height="16" viewBox="0 0 14 17"><use href="#pg"/></svg>
<div class="t" style="left:917px;top:145px;letter-spacing:-0.16px">localhost</div>
<svg class="abs" style="left:985px;top:145px" width="13" height="16" viewBox="0 0 14 17"><use href="#pg"/></svg>
<div class="t" style="left:1002px;top:145px;letter-spacing:-0.17px">cacti</div>
<svg class="abs" style="left:1041px;top:143px" width="18" height="19" viewBox="0 0 18 19"><path d="M1.200 4.800 L3.700 2.300 L6.700 2.300 L15.700 11.600 L16.700 17.500 L10.600 16.300 L1.200 7.200 Z" fill="#62a4e8" stroke="#0a2258" stroke-width="1.300" stroke-linejoin="round"/><path d="M3 5.500 L5.500 3.500" stroke="#fff" stroke-width="1.600"/><path d="M4.500 7.500 L12.500 15.300 M6.800 5.500 L14.500 13.500" stroke="#a8d4fc" stroke-width="1.200"/><path d="M10.600 16.300 L15.700 11.600 L16.700 17.500 Z" fill="#f4e4b0" stroke="#0a2258" stroke-width=".9" stroke-linejoin="round"/><path d="M15 16 L16.700 17.500 L14.300 17.100 Z" fill="#111"/></svg>
<div class="t" style="left:1060px;top:145px;letter-spacing:-0.33px">LJ Friends</div>
<div class="abs" style="left:0;top:77px;width:1px;height:90px;background:#fff"></div>
<div class="abs" id="content"></div>
<div class="abs" id="dlhead"></div>
<div class="abs" id="side"></div>
<div class="abs" id="reco"></div>
<!-- ===== page content ===== -->
<div class="abs" style="left:0;top:191px;width:1280px;height:4px;background:#6ba2d0"></div>
<div class="abs" style="left:0;top:202px;width:1280px;height:4px;background:#6ba2d0"></div>
<div class="t" id="logo" style="left:7px;top:181px;font-family:'DejaVu Serif','Liberation Serif',serif;font-weight:bold;font-size:26px;line-height:32px;color:#fff;-webkit-text-stroke:.7px #fff;letter-spacing:-.3px;transform-origin:0 0;transform:scaleX(1.4)">D-Link</div>
<div class="t" style="left:142px;top:184px;font-size:5px;line-height:6px;color:#cfe2f0">®</div>

<div class="nav" style="left:14px;top:246px">Device Info</div>
<div class="nav" style="left:26px;top:265px">Summary</div>
<div class="nav" style="left:26px;top:284px">WAN</div>
<div class="nav" style="left:26px;top:303px">Statistics</div>
<div class="abs" style="left:2px;top:320px;width:72px;height:17px;border:1px dotted #c8103c"></div>
<div class="nav" style="left:26px;top:322px;color:#c8103c">Route</div>
<div class="nav" style="left:26px;top:341px">ARP</div>
<div class="nav" style="left:26px;top:360px">DHCP</div>
<div class="nav" style="left:14px;top:379px">Advanced Setup</div>
<div class="nav" style="left:14px;top:398px">Diagnostics</div>
<div class="nav" style="left:14px;top:417px">Management</div>

<div class="pt" style="left:191px;top:245px;font-weight:bold;color:#4c4c4c;letter-spacing:.15px">Device Info -- Route</div>
<div class="pt" style="left:191px;top:275px;letter-spacing:.085px">Flags: U - up, ! - reject, G - gateway, H - host, R - reinstate</div>
<div class="pt" style="left:191px;top:290px">D - dynamic (redirect), M - modified (redirect).</div>

<table id="rt">
<colgroup><col style="width:81px"><col style="width:78px"><col style="width:106px"><col style="width:34px"><col style="width:48px"><col style="width:108px"><col style="width:94px"></colgroup>
<tr><th>Destination</th><th>Gateway</th><th>Subnet Mask</th><th>Flag</th><th>Metric</th><th>Service</th><th>Interface</th></tr>
<tr><td>192.168.5.1</td><td>0.0.0.0</td><td>255.255.255.255</td><td>UH</td><td>0</td><td class="us">pppoe_0_0_35_1</td><td class="us">ppp_0_0_35_1</td></tr>
<tr><td>192.168.1.0</td><td>0.0.0.0</td><td>255.255.255.0</td><td>U</td><td>0</td><td></td><td>br0</td></tr>
<tr><td>0.0.0.0</td><td>192.168.5.1</td><td>0.0.0.0</td><td>UG</td><td>0</td><td class="us">pppoe_0_0_35_1</td><td class="us">ppp_0_0_35_1</td></tr>
</table>

<div class="t" style="left:524px;top:909px;font-family:'Liberation Sans',sans-serif;font-size:11px;line-height:12px;letter-spacing:-.16px;color:#fff">Recommend: 800x600 pixels,High Color(16 Bits)</div>

<div class="abs" id="findbar"></div>
<div class="abs" id="status"></div>
<div class="abs" id="taskbar"></div>

<!-- ===== find bar ===== -->
<svg class="abs" style="left:4px;top:931px" width="18" height="16" viewBox="0 0 18 16"><path d="M3.500 3 L14.500 13 M14.500 3 L3.500 13" stroke="#6a6a66" stroke-width="4.600" stroke-linecap="round"/><path d="M3.500 3 L14.500 13 M14.500 3 L3.500 13" stroke="#9a9a94" stroke-width="2.400" stroke-linecap="round"/></svg>
<div class="t" style="left:34px;top:931px">Найти:</div>
<div class="abs" style="left:86px;top:926px;width:188px;height:25px;background:#fff;border:1px solid;border-color:#000 #fff #fff #000;box-shadow:inset 1px 1px 0 #6a6a6a"></div>
<svg class="abs" style="left:281px;top:932px" width="14" height="13" viewBox="0 0 14 13"><path d="M.5 6.500 L6 1 L6 4 L13 4 L13 9 L6 9 L6 12 Z" fill="url(#dotg)"/></svg>
<div class="t dis" style="left:298px;top:931px"><u>П</u>редыдущее</div>
<svg class="abs" style="left:400px;top:932px" width="14" height="13" viewBox="0 0 14 13"><path d="M13.500 6.500 L8 1 L8 4 L1 4 L1 9 L8 9 L8 12 Z" fill="url(#dotg)"/></svg>
<div class="t dis" style="left:416px;top:931px"><u>С</u>ледующее</div>
<svg class="abs" style="left:507px;top:930px" width="17" height="17" viewBox="0 0 17 17"><path d="M3 2 L9 1 L15 9 L10 14 L2 15 Z" fill="#dcd9d2" stroke="#c8c4bc" stroke-width="1"/><path d="M2 15 L7 11 L10 14" fill="#e6e3dc" stroke="#c8c4bc" stroke-width=".8"/></svg>
<div class="t dis" style="left:525px;top:931px">Подс<u>в</u>етить все</div>
<div class="abs" style="left:647px;top:932px;width:13px;height:13px;background:#fff;border:1px solid #000"></div>
<div class="t" style="left:664px;top:931px">Учесть <u>р</u>егистр</div>

<!-- ===== status bar ===== -->
<div class="abs" style="left:0;top:955px;width:1278px;height:21px;border:1px solid;border-color:#404040 #fff #fff #404040"></div>
<div class="t" style="left:8px;top:957px;letter-spacing:-.22px">http://192.168.1.1/rtroutecfg.cmd?action=view</div>

<!-- ===== taskbar ===== -->
<div class="pgb" style="left:10px;top:978px;width:35px">all</div>
<div class="pgb" style="left:46px;top:978px;width:36px;background:#ece9e3">web</div>
<div class="pgb" style="left:83px;top:978px;width:34px">doc</div>
<div class="pgb" style="left:10px;top:1002px;width:35px;height:22px">mail</div>
<div class="pgb" style="left:46px;top:1002px;width:35px;height:22px">icq</div>
<div class="t" style="left:131px;top:982px;font-weight:bold">DSL Router - Iceweasel</div>
<!-- lock / logout buttons -->
<div class="abs btn3d" style="left:1257px;top:978px;width:23px;height:23px"></div>
<svg class="abs" style="left:1260px;top:980px" width="18" height="18" viewBox="0 0 18 18"><rect x=".5" y=".5" width="17" height="17" rx="2" fill="#3a8ab8" stroke="#1a5a88"/><rect x="4.500" y="8" width="9" height="6.500" rx="1" fill="#fff"/><path d="M6.200 8 L6.200 6 A2.800 2.800 0 0 1 11.800 6 L11.800 8" fill="none" stroke="#fff" stroke-width="1.600"/><rect x="6" y="10.500" width="6" height="1.300" fill="#3a8ab8"/></svg>
<div class="abs btn3d" style="left:1257px;top:1001px;width:23px;height:23px"></div>
<svg class="abs" style="left:1260px;top:1003px" width="18" height="18" viewBox="0 0 18 18"><rect x=".5" y=".5" width="17" height="17" rx="2" fill="#c06a48" stroke="#8a3a20"/><circle cx="9" cy="9" r="5" fill="none" stroke="#fff" stroke-width="1.800"/><rect x="8.200" y="5.500" width="1.700" height="7" fill="#fff"/></svg>
</body>
</html>
